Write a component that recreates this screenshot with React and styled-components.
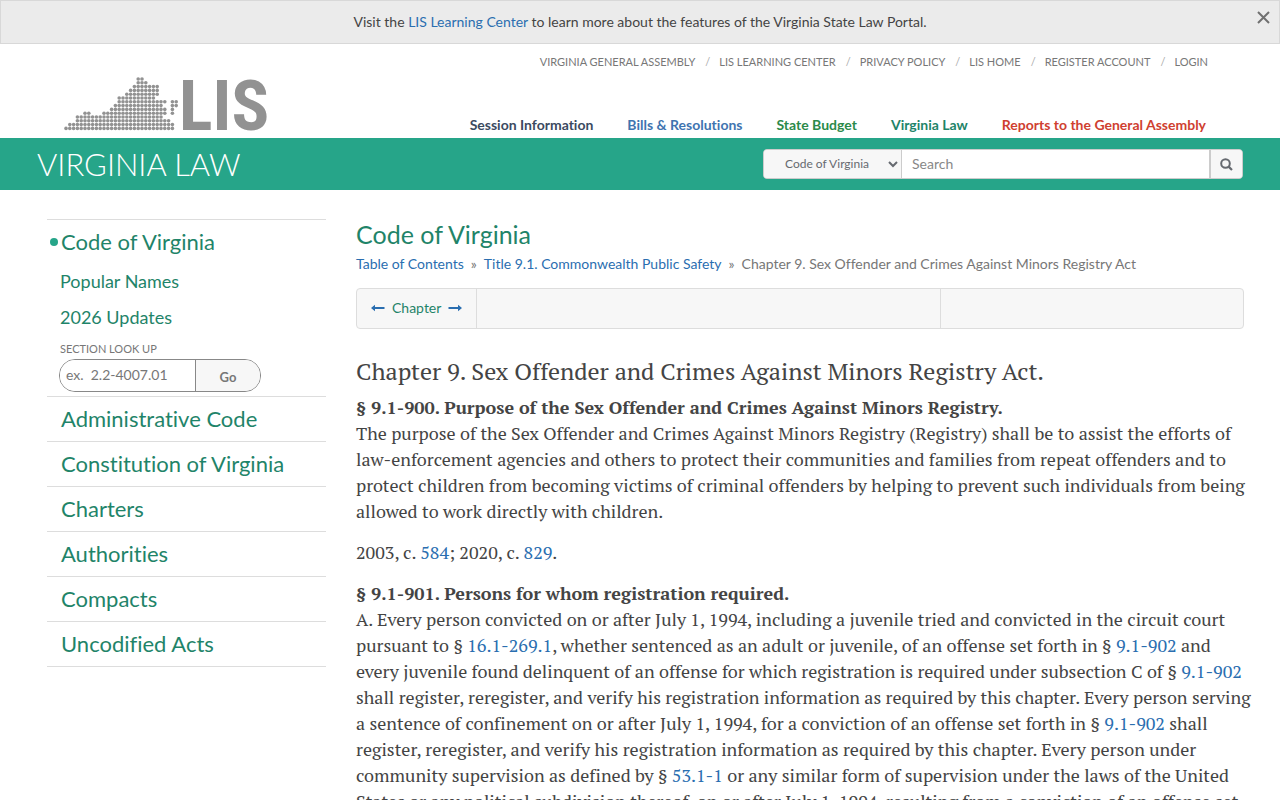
import React from "react";
import styled, { createGlobalStyle } from "styled-components";

const GlobalStyle = createGlobalStyle`
  * {
    box-sizing: border-box;
  }
  body {
    margin: 0;
    background: #ffffff;
    color: #444444;
    font-family: Lato, sans-serif;
    font-size: 14px;
    text-rendering: optimizeSpeed;
  }
  a {
    color: #2a6eb0;
    text-decoration: none;
  }
`;

// first and last dot of every run, one entry per row
const mapRows = [
  [[19, 20]],
  [[19, 21]],
  [[18, 24]],
  [[17, 24]],
  [[16, 24]],
  [[14, 23]],
  [[14, 26], [28, 29]],
  [[13, 25], [28, 29]],
  [[12, 26], [28, 28]],
  [[5, 6], [10, 26], [28, 28]],
  [[3, 25]],
  [[3, 27]],
  [[1, 28]],
  [[0, 28]],
];

const topLinks = [
  "Virginia General Assembly",
  "LIS Learning Center",
  "Privacy Policy",
  "LIS Home",
  "Register Account",
  "Login",
];

const portals = [
  { label: "Session Information", color: "#3b4a5f" },
  { label: "Bills & Resolutions", color: "#3f74b0" },
  { label: "State Budget", color: "#2b8a4a" },
  { label: "Virginia Law", color: "#1f8469" },
  { label: "Reports to the General Assembly", color: "#cf4030" },
];

const sections = [
  "Administrative Code",
  "Constitution of Virginia",
  "Charters",
  "Authorities",
  "Compacts",
  "Uncodified Acts",
];

const Logo = () => (
  <LogoDrawing viewBox="0 0 216 60" role="img" aria-label="LIS">
    {mapRows.map((runs, row) =>
      runs.map(([from, to]) =>
        Array.from({ length: to - from + 1 }, (_, i) => (
          <circle
            key={`${row}-${from + i}`}
            cx={4 + (from + i) * 3.8}
            cy={5 + row * 3.8}
            r="1.8"
          />
        ))
      )
    )}
    <text x="117" y="56">
      LIS
    </text>
  </LogoDrawing>
);

const App = () => {
  return (
    <Page>
      <GlobalStyle />
      <Notice>
        <span>
          Visit the <a href="#learning">LIS Learning Center</a> to learn more
          about the features of the Virginia State Law Portal.
        </span>
        <CloseButton aria-label="Close">
          <svg width="13" height="13" viewBox="0 0 13 13">
            <path d="M1 1L12 12M12 1L1 12" stroke="#707070" strokeWidth="2" />
          </svg>
        </CloseButton>
      </Notice>
      <Header>
        <LogoLink href="#home">
          <Logo />
        </LogoLink>
        <HeaderNavs>
          <TopNav>
            {topLinks.map((label) => (
              <TopLink href="#top" key={label}>
                {label}
              </TopLink>
            ))}
          </TopNav>
          <PortalNav>
            {portals.map(({ label, color }) => (
              <PortalLink href="#portal" key={label} $color={color}>
                {label}
              </PortalLink>
            ))}
          </PortalNav>
        </HeaderNavs>
      </Header>
      <Banner>
        <BannerTitle>VIRGINIA LAW</BannerTitle>
        <SearchForm>
          <SearchScope aria-label="Search in">
            <option>Code of Virginia</option>
          </SearchScope>
          <SearchInput type="text" placeholder="Search" aria-label="Search" />
          <SearchButton type="button" aria-label="Run search">
            <svg width="13" height="13" viewBox="0 0 13 13" fill="none">
              <circle cx="5.5" cy="5.5" r="4.3" stroke="#666a70" strokeWidth="2" />
              <path d="M8.6 8.6L12 12" stroke="#666a70" strokeWidth="2.2" />
            </svg>
          </SearchButton>
        </SearchForm>
      </Banner>
      <Columns>
        <Sidebar>
          <ActiveSection>
            <SectionLink href="#code" $active>
              Code of Virginia
            </SectionLink>
            <SubLink href="#names">Popular Names</SubLink>
            <SubLink href="#updates">2026 Updates</SubLink>
            <LookupLabel htmlFor="lookup">SECTION LOOK UP</LookupLabel>
            <LookupRow>
              <LookupInput id="lookup" type="text" placeholder="ex.  2.2-4007.01" />
              <LookupButton type="button">Go</LookupButton>
            </LookupRow>
          </ActiveSection>
          {sections.map((label) => (
            <SidebarItem key={label}>
              <SectionLink href="#section">{label}</SectionLink>
            </SidebarItem>
          ))}
        </Sidebar>
        <Main>
          <PageTitle>Code of Virginia</PageTitle>
          <Breadcrumbs>
            <a href="#toc">Table of Contents</a>
            <span>»</span>
            <a href="#title">Title 9.1. Commonwealth Public Safety</a>
            <span>»</span>
            <span>
              Chapter 9. Sex Offender and Crimes Against Minors Registry Act
            </span>
          </Breadcrumbs>
          <Pager>
            <PagerCell>
              <ArrowLink href="#previous" aria-label="Previous chapter">
                <svg width="14" height="8" viewBox="0 0 14 8">
                  <path d="M0 4L4 0.8V3H13.5V5H4V7.2Z" />
                </svg>
              </ArrowLink>
              <span>Chapter</span>
              <ArrowLink href="#next" aria-label="Next chapter">
                <svg width="14" height="8" viewBox="0 0 14 8">
                  <path d="M14 4L10 0.8V3H0.5V5H10V7.2Z" />
                </svg>
              </ArrowLink>
            </PagerCell>
            <PagerMiddle />
            <PagerEnd />
          </Pager>
          <Statute>
            <ChapterTitle>
              Chapter 9. Sex Offender and Crimes Against Minors Registry Act.
            </ChapterTitle>
            <SectionTitle>
              § 9.1-900. Purpose of the Sex Offender and Crimes Against Minors
              Registry.
            </SectionTitle>
            <Paragraph>
              The purpose of the Sex Offender and Crimes Against Minors Registry
              (Registry) shall be to assist the efforts of law-enforcement
              agencies and others to protect their communities and families from
              repeat offenders and to protect children from becoming victims of
              criminal offenders by helping to prevent such individuals from
              being allowed to work directly with children.
            </Paragraph>
            <Paragraph>
              2003, c. <a href="#584">584</a>; 2020, c. <a href="#829">829</a>.
            </Paragraph>
            <SectionTitle>
              § 9.1-901. Persons for whom registration required.
            </SectionTitle>
            <Paragraph>
              A. Every person convicted on or after July 1, 1994, including a
              juvenile tried and convicted in the circuit court pursuant to §{" "}
              <a href="#16.1-269.1">16.1-269.1</a>, whether sentenced as an
              adult or juvenile, of an offense set forth in §{" "}
              <a href="#9.1-902">9.1-902</a> and every juvenile found delinquent
              of an offense for which registration is required under subsection
              C of § <a href="#9.1-902">9.1-902</a> shall register, reregister,
              and verify his registration information as required by this
              chapter. Every person serving a sentence of confinement on or
              after July 1, 1994, for a conviction of an offense set forth in §{" "}
              <a href="#9.1-902">9.1-902</a> shall register, reregister, and
              verify his registration information as required by this chapter.
              Every person under community supervision as defined by §{" "}
              <a href="#53.1-1">53.1-1</a> or any similar form of supervision
              under the laws of the United States or any political subdivision
              thereof, on or after July 1, 1994, resulting from a conviction of
              an offense set
            </Paragraph>
          </Statute>
        </Main>
      </Columns>
    </Page>
  );
};

export default App;

const Page = styled.div`
  display: flex;
  flex-direction: column;
`;
const Notice = styled.div`
  position: relative;
  padding: 12px 48px;
  border: 1px solid #d8d8d8;
  background: #ebebeb;
  line-height: 18px;
  text-align: center;
`;
const CloseButton = styled.button`
  position: absolute;
  top: 10px;
  right: 9px;
  display: flex;
  padding: 0;
  border: 0;
  background: none;
`;
const Header = styled.header`
  display: flex;
  justify-content: space-between;
  align-items: flex-end;
  padding: 9px 72px 4px 62px;
`;
const LogoLink = styled.a`
  display: flex;
`;
const LogoDrawing = styled.svg`
  width: 216px;
  height: 60px;
  fill: #929292;
  font-family: "Roboto Condensed", Roboto, sans-serif;
  font-size: 70px;
  font-weight: 700;
`;
const HeaderNavs = styled.div`
  display: flex;
  flex-direction: column;
  align-items: flex-end;
  gap: 45px;
`;
const TopNav = styled.nav`
  display: flex;
`;
const TopLink = styled.a`
  color: #777777;
  font-size: 11px;
  line-height: 18px;
  text-transform: uppercase;

  & + &::before {
    content: "/";
    padding: 0 9px 0 10px;
    color: #aaaaaa;
  }
`;
const PortalNav = styled.nav`
  display: flex;
  gap: 34px;
  padding-right: 2px;
`;
const PortalLink = styled.a`
  color: ${(props) => props.$color};
  font-size: 14px;
  font-weight: 700;
  line-height: 18px;
`;
const Banner = styled.div`
  display: flex;
  justify-content: space-between;
  align-items: center;
  height: 52px;
  padding: 0 37px;
  background: #26a589;
`;
const BannerTitle = styled.div`
  color: #ffffff;
  font-size: 31px;
  font-weight: 300;
  line-height: 40px;
`;
const SearchForm = styled.form`
  display: flex;
  width: 480px;
  height: 30px;
  border: 1px solid #cccccc;
  border-radius: 4px;
  background: #f7f7f7;
  overflow: hidden;
`;
const SearchScope = styled.select`
  width: 138px;
  padding: 0 0 2px 17px;
  border: 0;
  border-right: 1px solid #cccccc;
  background: #f7f7f7;
  color: #666a70;
  font-family: inherit;
  font-size: 12px;
  text-rendering: inherit;
`;
const SearchInput = styled.input`
  flex: 1;
  min-width: 0;
  padding: 0 10px 2px;
  border: 0;
  font-family: inherit;
  font-size: 14px;
  text-rendering: inherit;

  &::placeholder {
    color: #888888;
  }
`;
const SearchButton = styled.button`
  display: flex;
  justify-content: center;
  align-items: center;
  width: 33px;
  padding: 0;
  border: 0;
  border-left: 2px solid #cccccc;
  background: #f7f7f7;
`;
const Columns = styled.div`
  display: flex;
  gap: 30px;
  padding: 29px 28px 0 47px;
`;
const Sidebar = styled.nav`
  flex: 0 0 279px;
  align-self: flex-start;
  border-bottom: 1px solid #dddddd;
`;
const SidebarItem = styled.div`
  border-top: 1px solid #dddddd;
`;
const ActiveSection = styled.div`
  display: flex;
  flex-direction: column;
  padding-bottom: 4px;
  border-top: 1px solid #dddddd;
`;
const SectionLink = styled.a`
  position: relative;
  display: block;
  padding-left: 14px;
  color: #1f8469;
  font-size: 22px;
  line-height: 44px;

  &::before {
    content: "";
    position: absolute;
    display: ${(props) => (props.$active ? "block" : "none")};
    top: 18px;
    left: 3px;
    width: 8px;
    height: 8px;
    border-radius: 50%;
    background: #26a589;
  }
`;
const SubLink = styled.a`
  padding: 0 0 2px 13px;
  color: #1f8469;
  font-size: 18px;
  line-height: 34px;
`;
const LookupLabel = styled.label`
  padding: 4px 0 1px 13px;
  color: #777777;
  font-size: 11px;
  line-height: 18px;
`;
const LookupRow = styled.div`
  display: flex;
  width: 202px;
  height: 33px;
  margin-left: 12px;
  border: 1px solid #888888;
  border-radius: 16px;
  overflow: hidden;
`;
const LookupInput = styled.input`
  flex: 1;
  min-width: 0;
  padding: 0 6px 2px;
  border: 0;
  font-family: inherit;
  font-size: 14px;
  text-rendering: inherit;

  &::placeholder {
    color: #777777;
  }
`;
const LookupButton = styled.button`
  width: 65px;
  border: 0;
  border-left: 1px solid #888888;
  padding: 2px 0 0;
  background: #f7f7f7;
  color: #777777;
  font-family: inherit;
  font-size: 13px;
  font-weight: 700;
`;
const Main = styled.main`
  flex: 1;
  min-width: 0;
`;
const PageTitle = styled.h1`
  margin: 0;
  color: #1f8469;
  font-size: 25px;
  font-weight: 400;
  line-height: 31px;
`;
const Breadcrumbs = styled.div`
  display: flex;
  gap: 7px;
  padding: 4px 0 14px;
  color: #777777;
  line-height: 20px;
`;
const Pager = styled.div`
  display: flex;
  height: 41px;
  margin-right: 8px;
  border: 1px solid #dddddd;
  border-radius: 4px;
  background: #f7f7f7;
`;
const PagerCell = styled.div`
  display: flex;
  align-items: center;
  gap: 7px;
  padding: 0 14px 2px;
  border-right: 1px solid #dddddd;
  color: #1f8469;
`;
const ArrowLink = styled.a`
  display: flex;
  fill: #2a6eb0;
`;
const PagerMiddle = styled.div`
  flex: 464;
  border-right: 1px solid #dddddd;
`;
const PagerEnd = styled.div`
  flex: 303;
`;
const Statute = styled.article`
  padding-top: 25px;
  font-family: "PT Serif", "Liberation Serif", serif;
  font-size: 18px;
  line-height: 26px;
`;
const ChapterTitle = styled.h2`
  margin: 0 0 6px;
  font-size: 24px;
  font-weight: 400;
  line-height: 34px;
`;
const SectionTitle = styled.h3`
  margin: 0;
  font-size: 18px;
  font-weight: 700;
  line-height: 26px;
`;
const Paragraph = styled.p`
  margin: 0 0 15px;
`;
